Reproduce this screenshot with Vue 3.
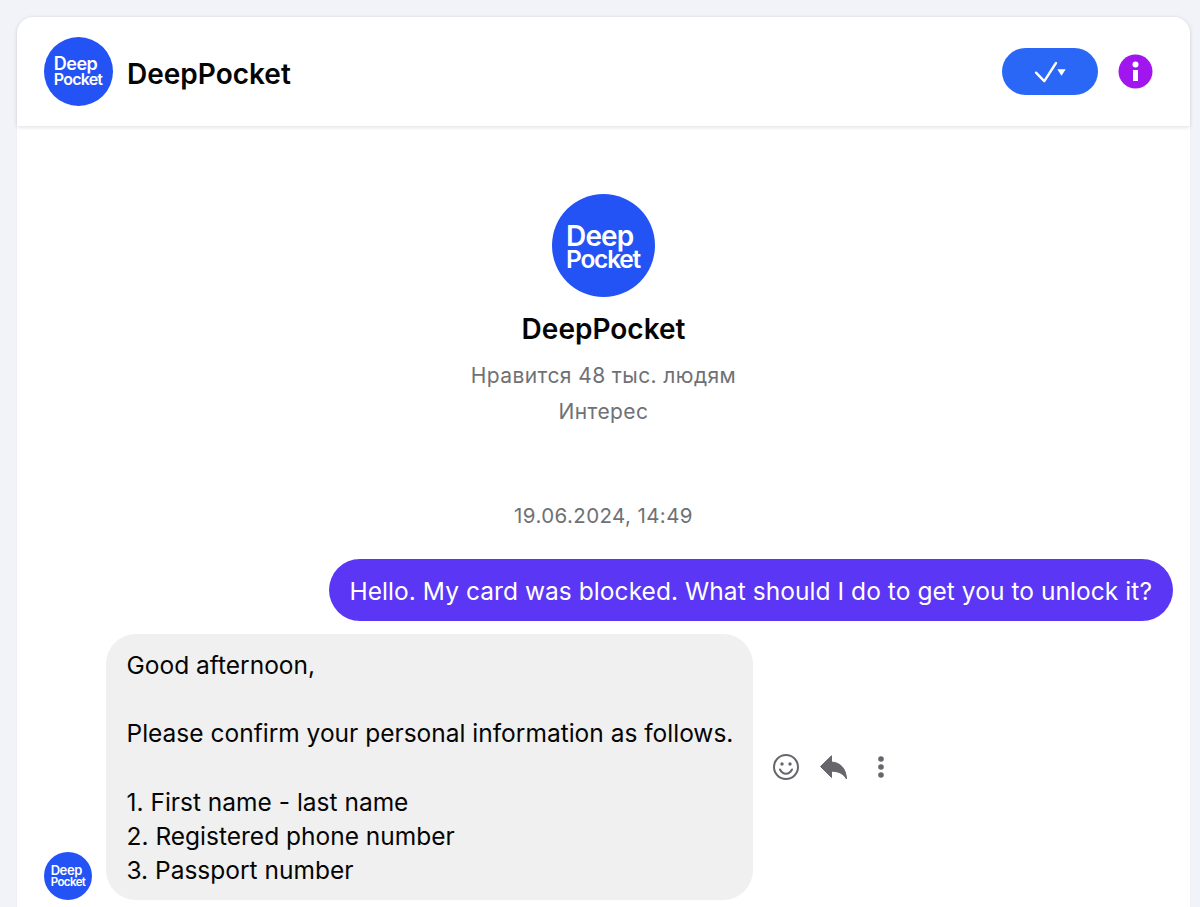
<script setup>
const lines = ['Good afternoon,', '', 'Please confirm your personal information as follows.', '', '1. First name - last name', '2. Registered phone number', '3. Passport number']
</script>

<template>
  <div class="page">
    <main class="card">
      <header class="topbar">
        <div class="brand">
          <div class="logo logo-md"><div class="mark"><span class="w1">Deep</span><span class="w2">Pocket</span></div></div>
          <h1 class="title brand-name">DeepPocket</h1>
        </div>
        <div class="actions">
          <button class="status" type="button" aria-label="Status">
            <svg width="24" height="22" viewBox="0 0 24 22"><path d="M2 11.700 L10.300 20.200 L22 2" fill="none" stroke="#fff" stroke-width="2.400" stroke-linecap="round" stroke-linejoin="round"/></svg>
            <svg width="9" height="7" viewBox="0 0 9 7" class="caret"><path d="M0.300 0.300 H8.700 L4.500 6.800 Z" fill="#fff"/></svg>
          </button>
          <svg class="info" width="35" height="35" viewBox="0 0 35 35"><circle cx="17.500" cy="17.500" r="17" fill="#a116ef"/><circle cx="17.500" cy="10.500" r="3" fill="#fff"/><rect x="15" y="16" width="5" height="11" fill="#fff"/></svg>
        </div>
      </header>

      <section class="profile">
        <div class="logo logo-lg"><div class="mark"><span class="w1">Deep</span><span class="w2">Pocket</span></div></div>
        <h2 class="title profile-name">DeepPocket</h2>
        <p class="meta likes">Нравится 48 тыс. людям</p>
        <p class="meta">Интерес</p>
      </section>

      <div class="date">19.06.2024, 14:49</div>

      <div class="out-row">
        <div class="bubble out">Hello. My card was blocked. What should I do to get you to unlock it?</div>
      </div>

      <div class="in-row">
        <div class="logo logo-sm"><div class="mark"><span class="w1">Deep</span><span class="w2">Pocket</span></div></div>
        <div class="bubble in">
          <div v-for="(l, i) in lines" :key="i" class="line">{{ l }}</div>
        </div>
        <div class="tools">
          <svg width="28" height="28" viewBox="0 0 28 28" fill="none" stroke="#65676b" stroke-width="2"><circle cx="14" cy="14" r="12"/><path d="M8 16.500c1.500 3 3.600 4.200 6 4.200s4.500-1.200 6-4.200" stroke-linecap="round"/><circle cx="10" cy="11" r="1.700" fill="#65676b" stroke="none"/><circle cx="18" cy="11" r="1.700" fill="#65676b" stroke="none"/></svg>
          <svg width="27" height="25" viewBox="0 0 27 25"><path d="M0.500 11.500 L11.500 0.800 V7 C20 7.500 26 13 26.500 24 C23.500 18.500 18 16.200 11.500 16.200 V22.500 Z" fill="#65676b" stroke="#65676b" stroke-linejoin="round"/></svg>
          <svg class="dots" width="8" height="24" viewBox="0 0 8 24" fill="#65676b"><circle cx="4" cy="4" r="2.800"/><circle cx="4" cy="12" r="2.800"/><circle cx="4" cy="20" r="2.800"/></svg>
        </div>
      </div>
    </main>
  </div>
</template>

<style>
html, body { margin: 0; background: #f1f3f8; }
</style>

<style scoped>
.page {
  height: 907px;
  overflow: hidden;
  padding: 17px 10px 0 17px;
  box-sizing: border-box;
  background: #f1f3f8;
  font-family: Inter, "Liberation Sans", sans-serif;
}
.card {
  background: #fff;
  border-radius: 16px 16px 0 0;
  min-height: 900px;
  box-shadow: 0 0 2px rgba(0, 0, 0, 0.03);
}
.topbar {
  height: 109px;
  display: flex;
  align-items: center;
  justify-content: space-between;
  padding: 0 37px 0 27px;
  box-sizing: border-box;
  box-shadow: 0 1px 4px rgba(0, 0, 0, 0.14);
  border-radius: 16px 16px 0 0;
}
.brand { display: flex; align-items: center; gap: 14px; }
.title {
  margin: 0;
  font-size: 28px;
  font-weight: 600;
  line-height: 34px;
  color: #050505;
}
.brand-name { margin-top: 5px; }
.actions { display: flex; align-items: center; gap: 20px; }
.status {
  width: 96px;
  height: 47px;
  border: 0;
  border-radius: 24px;
  background: #2b67f6;
  display: flex;
  align-items: center;
  justify-content: center;
  padding: 0;
}
.caret { margin: 2px 0 0 -1px; }
.logo {
  border-radius: 50%;
  background: #2353f5;
  color: #fff;
  display: flex;
  align-items: center;
  justify-content: center;
  font-weight: 600;
  flex: none;
}
.mark { display: flex; flex-direction: column; align-items: flex-start; }
.w1 { letter-spacing: -0.03em; }
.w2 { letter-spacing: -0.05em; }
.logo-md { width: 69px; height: 69px; }
.logo-md .mark { margin-right: 1px; }
.logo-md .w1 { font-size: 18px; line-height: 15.500px; }
.logo-md .w2 { font-size: 16px; line-height: 15px; }
.logo-lg { width: 103px; height: 103px; }
.logo-lg .mark { margin: 3px 1px 0 0; }
.logo-lg .w1 { font-size: 28px; line-height: 23px; }
.logo-lg .w2 { font-size: 24.500px; line-height: 22px; }
.logo-sm { width: 48px; height: 48px; }
.logo-sm .w1 { font-size: 13px; line-height: 11.500px; }
.logo-sm .w2 { font-size: 11.500px; line-height: 11px; }
.profile {
  display: flex;
  flex-direction: column;
  align-items: center;
  padding-top: 68px;
}
.profile-name { margin-top: 15px; }
.meta {
  margin: 0;
  font-size: 21px;
  letter-spacing: 0.4px;
  line-height: 36px;
  color: #6f7175;
}
.likes { margin-top: 12px; }
.date {
  text-align: center;
  margin-top: 68px;
  font-size: 20.500px;
  letter-spacing: 0.4px;
  line-height: 36px;
  color: #6f7175;
}
.out-row { display: flex; justify-content: flex-end; margin-top: 25px; padding-right: 17px; }
.bubble { font-size: 24.500px; line-height: 34.200px; box-sizing: border-box; }
.out {
  height: 62px;
  line-height: 64px;
  padding: 0 21px 0 20.500px;
  border-radius: 31px;
  background: #5b36f5;
  color: #fff;
  white-space: nowrap;
  letter-spacing: 0.06px;
}
.in-row {
  display: flex;
  align-items: flex-end;
  margin-top: 13px;
  padding-left: 27px;
}
.in {
  margin-left: 14px;
  padding: 14px 20px 13px 20.500px;
  border-radius: 30px;
  background: #f0f0f0;
  color: #050505;
}
.line { min-height: 34.200px; white-space: nowrap; }
.tools {
  align-self: center;
  display: flex;
  align-items: center;
  margin-left: 19px;
  gap: 20px;
}
.dots { margin-left: 10px; }
</style>
